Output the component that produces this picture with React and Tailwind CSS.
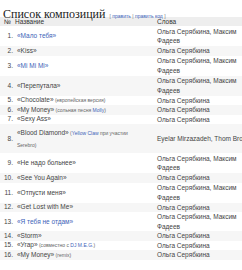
import React from 'react';

const LINK = 'text-[#3d63b8]';

const TRACKS = [
  { n: '1.', title: '«Мало тебя»', link: true, words: 'Ольга Серябкина, Максим Фадеев', h: 'h-[20px]' },
  { n: '2.', title: '«Kiss»', words: 'Ольга Серябкина', h: 'h-[9px]' },
  { n: '3.', title: '«Mi Mi Mi»', link: true, words: 'Ольга Серябкина, Максим Фадеев', h: 'h-[20px]' },
  { n: '4.', title: '«Перепутала»', words: 'Ольга Серябкина, Максим Фадеев', h: 'h-[20px]' },
  { n: '5.', title: '«Chocolate»', note: ['(европейская версия)'], words: 'Ольга Серябкина', h: 'h-[8px]' },
  { n: '6.', title: '«My Money»', note: ['(сольная песня ', 'Molly', ')'], words: 'Ольга Серябкина', h: 'h-[8px]' },
  { n: '7.', title: '«Sexy Ass»', words: 'Ольга Серябкина', h: 'h-[8px]' },
  { n: '8.', title: '«Blood Diamond»', note: ['(', 'Yellow Claw', ' при участии'], tail: 'Serebro)', words: 'Eyelar Mirzazadeh, Thom Brown', h: 'h-[29px]', tall: true },
  { n: '9.', title: '«Не надо больнее»', words: 'Ольга Серябкина, Максим Фадеев', h: 'h-[20px]' },
  { n: '10.', title: '«See You Again»', words: 'Ольга Серябкина', h: 'h-[9px]' },
  { n: '11.', title: '«Отпусти меня»', words: 'Ольга Серябкина, Максим Фадеев', h: 'h-[20px]' },
  { n: '12.', title: '«Get Lost with Me»', words: 'Ольга Серябкина', h: 'h-[9px]' },
  { n: '13.', title: '«Я тебя не отдам»', link: true, words: 'Ольга Серябкина, Максим Фадеев', h: 'h-[18px]' },
  { n: '14.', title: '«Storm»', words: 'Ольга Серябкина', h: 'h-[8px]' },
  { n: '15.', title: '«Угар»', note: ['(совместно с ', 'DJ M.E.G.', ')'], words: 'Ольга Серябкина', h: 'h-[8px]' },
  { n: '16.', title: '«My Money»', note: ['(remix)'], words: 'Ольга Серябкина', h: 'h-[8px]' },
];

function Note({ parts }) {
  return (
    <span className="text-[5px] text-[#666]">
      {' '}
      {parts.map((p, i) =>
        i % 2 === 1 ? (
          <span key={i} className={LINK}>{p}</span>
        ) : (
          <span key={i}>{p}</span>
        )
      )}
    </span>
  );
}

export default function App() {
  return (
    <div className="w-[242px] h-[270px] overflow-hidden bg-white font-['Liberation_Sans',Arial,sans-serif] text-[#444]">
      <div className="h-[17px] pl-[3px] pt-[1px] whitespace-nowrap">
        <span className="font-['Liberation_Serif',serif] text-[12px] leading-[13px] text-[#222]">
          Список композиций
        </span>
        <span className="ml-[4px] text-[5px] text-[#777]">
          [ <span className={LINK}>править</span> | <span className={LINK}>править код</span> ]
        </span>
      </div>

      <table className="w-[254px] table-fixed border-collapse text-[6.5px] leading-[8px]">
        <colgroup>
          <col className="w-[14px]" />
          <col className="w-[141px]" />
          <col className="w-[99px]" />
        </colgroup>
        <thead>
          <tr className="h-[9px] bg-[#eeeeee] text-[#333]">
            <th className="pl-[4px] text-left font-normal">№</th>
            <th className="pl-[1px] text-left font-normal">Название</th>
            <th className="pl-[2px] text-left font-normal">Слова</th>
          </tr>
        </thead>
        <tbody>
          {TRACKS.map((t, i) => (
            <tr key={t.n} className={`${t.h} ${i % 2 === 1 ? 'bg-[#f6f6f6]' : 'bg-white'}`}>
              <td className="pr-[1px] text-right align-middle">{t.n}</td>
              <td className={`pl-[3px] pr-[6px] align-middle ${t.tall ? 'leading-[11px]' : ''}`}>
                <span className={t.link ? LINK : ''}>{t.title}</span>
                {t.note && <Note parts={t.note} />}
                {t.tail && (
                  <>
                    <br />
                    <span className="text-[5px] text-[#666]">{t.tail}</span>
                  </>
                )}
              </td>
              <td className={`pl-[2px] align-middle leading-[9.5px] ${t.tall ? 'whitespace-nowrap overflow-hidden' : ''}`}>
                {t.words}
              </td>
            </tr>
          ))}
        </tbody>
      </table>
    </div>
  );
}
